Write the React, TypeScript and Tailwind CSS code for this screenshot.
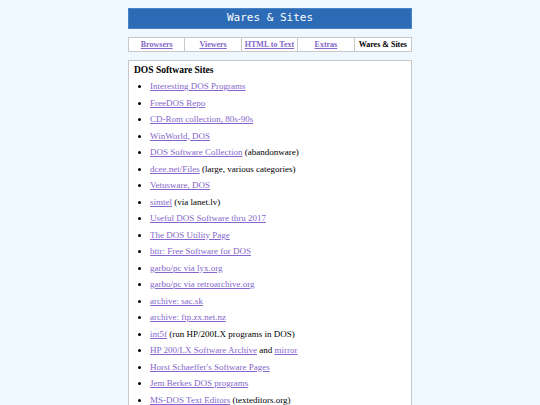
import React from 'react'

interface Item {
  link: string
  note?: string
  extra?: string
}

const items: Item[] = [
  { link: 'Interesting DOS Programs' },
  { link: 'FreeDOS Repo' },
  { link: 'CD-Rom collection, 80s-90s' },
  { link: 'WinWorld, DOS' },
  { link: 'DOS Software Collection', note: '(abandonware)' },
  { link: 'dcee.net/Files', note: '(large, various categories)' },
  { link: 'Vetusware, DOS' },
  { link: 'simtel', note: '(via lanet.lv)' },
  { link: 'Useful DOS Software thru 2017' },
  { link: 'The DOS Utility Page' },
  { link: 'bttr: Free Software for DOS' },
  { link: 'garbo/pc via lyx.org' },
  { link: 'garbo/pc via retroarchive.org' },
  { link: 'archive: sac.sk' },
  { link: 'archive: ftp.zx.net.nz' },
  { link: 'int5f', note: '(run HP/200LX programs in DOS)' },
  { link: 'HP 200/LX Software Archive', note: 'and', extra: 'mirror' },
  { link: "Horst Schaeffer's Software Pages" },
  { link: 'Jem Berkes DOS programs' },
  { link: 'MS-DOS Text Editors', note: '(texteditors.org)' },
]

const tabs = ['Browsers', 'Viewers', 'HTML to Text', 'Extras']

const linkCls = 'text-[#8466cc] underline'

export default function App() {
  return (
    <div className="min-h-screen bg-[#f0f8ff] font-['Liberation_Serif',serif] text-black">
      <div className="mx-auto w-[284px] pt-[8px]">
        <div className="h-[21px] bg-[#2c6bb6] border border-[#4a83c6] flex items-center justify-center font-['DejaVu_Sans_Mono',monospace] text-white text-[11px]">
          Wares &amp; Sites
        </div>

        <div className="mt-[8px] grid grid-cols-5 border border-[#c8c8c8] bg-white h-[15px] text-[8px] font-bold">
          {tabs.map((t) => (
            <div key={t} className="flex items-center justify-center border-r border-[#c8c8c8]">
              <a className={linkCls}>{t}</a>
            </div>
          ))}
          <div className="flex items-center justify-center">Wares &amp; Sites</div>
        </div>

        <div className="mt-[8px] bg-white border border-[#c8c8c8] px-[5px] pt-[4px] pb-[8px]">
          <div className="text-[9.5px] font-bold leading-[10px]">DOS Software Sites</div>
          <ul className="mt-[6px] pl-[16px] list-disc text-[9px] leading-[10px] flex flex-col gap-[6.5px]">
            {items.map((it) => (
              <li key={it.link}>
                <a className={linkCls}>{it.link}</a>
                {it.note && <span> {it.note}</span>}
                {it.extra && (
                  <>
                    {' '}
                    <a className={linkCls}>{it.extra}</a>
                  </>
                )}
              </li>
            ))}
          </ul>
        </div>
      </div>
    </div>
  )
}
